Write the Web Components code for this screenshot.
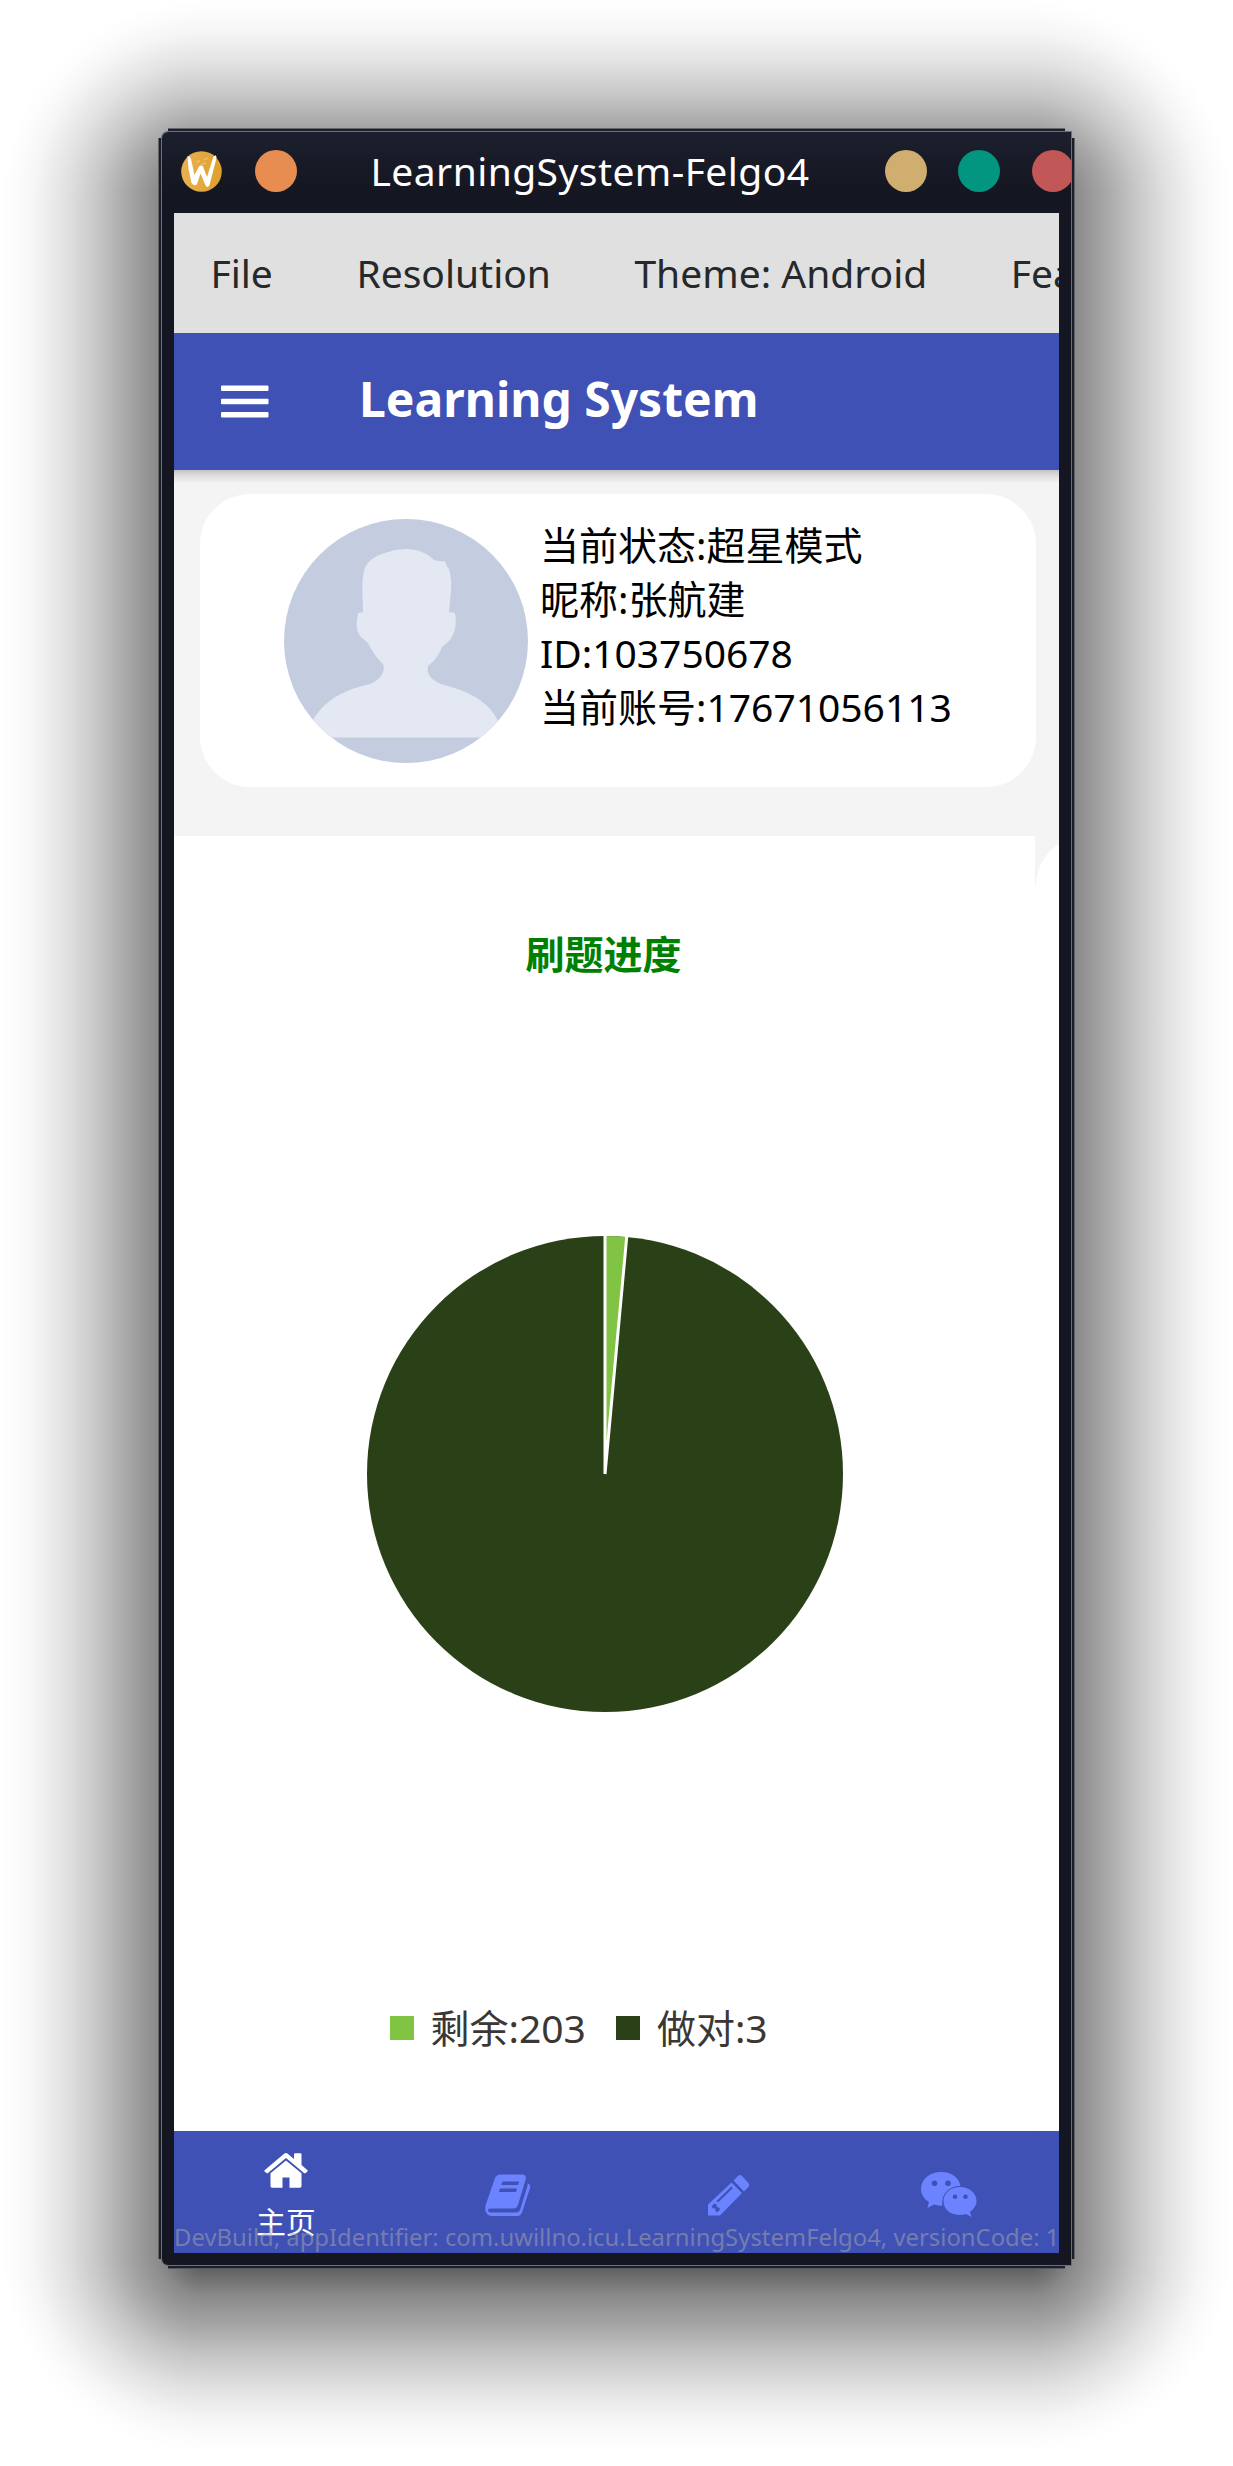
<!DOCTYPE html>
<html lang="zh-CN">
<head>
<meta charset="utf-8">
<title>LearningSystem-Felgo4</title>
<style>
html,body{margin:0;background:#fff}
body{width:1233px;height:2466px;overflow:hidden;font-family:"Noto Sans","Noto Sans CJK SC",sans-serif;font-size:39px}
</style>
</head>
<body>
<app-window>
  <title-bar slot="title">LearningSystem-Felgo4</title-bar>
  <menu-bar><span>File</span><span>Resolution</span><span>Theme: Android</span><span>Features</span></menu-bar>
  <nav-bar>Learning System</nav-bar>
  <main-page></main-page>
  <tab-bar></tab-bar>
</app-window>
<script>
function define(name, html) {
  const t = document.createElement('template');
  t.innerHTML = html;
  customElements.define(name, class extends HTMLElement {
    constructor() {
      super();
      this.attachShadow({mode: 'open'}).appendChild(t.content.cloneNode(true));
    }
  });
}

// Window shadow: one falloff curve, used for the four edges and the four corners.
const falloff = [[0,.7],[20,.62],[47,.46],[78,.345],[108,.22],[140,.115],[172,.035],[190,.01],[205,0]]
  .map(([d, a]) => `rgba(0,0,0,${a}) ${d}px`).join(',');
const corner = (at, pos, size) => `radial-gradient(circle 217px at ${at},${falloff}) ${pos}/${size} no-repeat`;
const edge = (to, pos, size) => `linear-gradient(to ${to},${falloff}) ${pos}/${size} no-repeat`;
const shadow = [
  corner('100% 100%', '0 0', '205px 203px'),
  corner('0 100%', '1028px 0', '205px 203px'),
  corner('100% 0', '0 2249px', '205px 217px'),
  corner('0 0', '1028px 2249px', '205px 217px'),
  edge('top', '205px 0', '823px 203px'),
  edge('bottom', '205px 2249px', '823px 217px'),
  edge('left', '0 203px', '205px 2046px'),
  edge('right', '1028px 203px', '205px 2046px')
].join(',');

define('app-window', `
<style>
:host{display:block;padding:132px 162px 201px;box-sizing:border-box;height:2466px;background:${shadow}}
.frame{width:909px;height:2133px;display:flex;flex-direction:column;background:linear-gradient(#1c1f2d,#141721 60px);border-radius:6px 0 0 6px;
box-shadow:0 0 0 1px #6b6f7a,0 -9px 0 -6px #1b1e2b,0 9px 0 -6px #1b1e2b,-9px 0 0 -6px #1b1e2b,9px 0 0 -6px #1b1e2b,
0 -10px 0 -6px #626469,0 10px 0 -6px #555860,-10px 0 0 -6px #626469,10px 0 0 -6px #626469}
.client{margin:0 12px;height:2040px;overflow:hidden;display:flex;flex-direction:column}
</style>
<div class="frame"><slot name="title"></slot><div class="client"><slot></slot></div></div>`);

define('title-bar', `
<style>
:host{display:flex;align-items:center;height:81px;box-sizing:border-box;padding:0 0 3px 19px;color:#fff;overflow:hidden}
svg,i{flex:none;display:block}
i{width:42px;height:42px;border-radius:50%}
.o{background:#e88d51;margin-left:32.500px}
.t{flex:none;margin-left:74px;width:443px;white-space:nowrap;line-height:54px;letter-spacing:.43px}
.b{display:flex;flex:none;gap:31.700px;margin-left:71px}
</style>
<svg width="41" height="41" viewBox="0 0 41 41"><defs><linearGradient id="g"><stop stop-color="#e9b053"/><stop offset="1" stop-color="#dda12b"/></linearGradient></defs><circle cx="20.5" cy="20.5" r="20.3" fill="url(#g)"/><path fill="#fff" d="M6.500 5Q9 5 10 8L13.500 24L18 15.500Q20 13.500 22 15.500L26 26L32 7Q32.500 4 35 4.500Q36 6 35 9L28.500 34Q26.500 37.500 24.500 34.500L19.500 22.500L16 33Q13.500 36 10.500 32L7.500 18Z"/><path d="M15 11l4-1M23 9l4-2M20 14l5-2" stroke="#f5d391" stroke-width=".8"/></svg>
<i class="o"></i><div class="t"><slot></slot></div>
<div class="b"><i style="background:#cfae70"></i><i style="background:#02957f"></i><i style="background:#c15757"></i></div>`);

define('menu-bar', `
<style>
:host{display:flex;flex:none;align-items:center;gap:83.500px;height:120px;box-sizing:border-box;padding:0 0 0 36.500px;background:#e0e0e0;color:#26282a;white-space:nowrap;line-height:54px}
</style><slot></slot>`);

define('nav-bar', `
<style>
:host{display:flex;flex:none;align-items:center;height:137px;box-sizing:border-box;padding:0 0 6px 47px;background:#4051b5;color:#fff;font-size:48px;font-weight:700;line-height:66px;white-space:nowrap;position:relative;z-index:1}
:host::after{content:"";position:absolute;left:0;right:0;top:137px;height:13px;background:linear-gradient(#c3c3c3,#d9d9d9 35%,#f4f4f4)}
svg{flex:none;margin:6px 90px 0 0}
</style>
<svg width="48" height="33" viewBox="0 0 48 33" fill="#fff"><rect x="0" y=".5" width="47.5" height="5.5" rx="1"/><rect x="0" y="13.7" width="47.5" height="5.5" rx="1"/><rect x="0" y="27" width="47.5" height="5.5" rx="1"/></svg>
<slot></slot>`);

define('user-avatar', `
<style>:host{display:block;flex:none;width:244px;height:244px}svg{display:block}</style>
<svg width="244" height="244" viewBox="0 0 244 244"><defs><clipPath id="c"><circle cx="122" cy="122" r="122"/></clipPath></defs>
<g clip-path="url(#c)"><rect width="244" height="244" fill="#c4cce0"/>
<path fill="#e4e8f2" d="M122 30C134 30 143 34 150 41Q156 43 161 42Q162 47 165 50Q168 60 167 72L165 93L171 94C173 106 171 114 166 121L158 128C154 138 150 142 144 147C142 156 148 161 157 165C180 171 204 180 214 202V218.500H28V203C40 180 63 170 86 165C96 161 102 153 99 145C92 138 88 132 84 124L76 117C71 110 73 101 74 94L79 93C79 80 77 64 80 52C84 37 101 34 111 31Z"/></g></svg>`);

define('user-card', `
<style>
:host{display:flex;flex:none;box-sizing:border-box;margin:24px 23px 0 26px;height:293px;padding:25px 0 0 84px;background:#fff;border-radius:50px;color:#000}
.info{margin:-1px 0 0 12px;line-height:54px;white-space:nowrap;display:flex;flex-direction:column}
</style>
<user-avatar></user-avatar><div class="info"><slot></slot></div>`);

define('pie-chart', `
<style>
:host{display:flex;flex:none;flex-direction:column;align-items:center;box-sizing:border-box;width:861px;height:1295px;padding-top:89px;background:#fff}
h2{margin:0;font-size:39px;line-height:58px;font-weight:700;color:#008000;padding-right:2px}
svg{display:block;margin-top:251px}
.legend{display:flex;align-items:center;margin:285px 0 0;line-height:58px;color:#3b3734;width:430px;white-space:nowrap}
i{flex:none;width:24px;height:24px;margin-right:17px}
span+i{margin-left:30px}
</style>
<h2>刷题进度</h2>
<svg width="480" height="480" viewBox="-240 -240 480 480"><circle r="238" fill="#2a4117"/><path d="M0 0V-238A238 238 0 0 1 21.700 -237Z" fill="#81c342" /><path d="M0 0V-240M0 0L21.900 -239" stroke="#fff" stroke-width="3"/></svg>
<div class="legend"><i style="background:#81c342"></i><span>剩余:203</span><i style="background:#2a4117"></i><span>做对:3</span></div>`);

define('main-page', `
<style>
:host{display:flex;flex-direction:column;flex:none;height:1661px;background:#f4f4f4;overflow:hidden}
.row{display:flex;margin-top:49px}
.next{flex:none;width:400px;margin-left:1px;background:#fff;border-radius:50px 0 0 0}
.fill{flex:none;width:1px;margin:50px -1px 0 0;background:#fdfdfd}
</style>
<user-card><div>当前状态:超星模式</div><div>昵称:张航建</div><div>ID:103750678</div><div>当前账号:17671056113</div></user-card>
<div class="row"><pie-chart></pie-chart><div class="fill"></div><div class="next"></div></div>`);

define('tab-bar', `
<style>
:host{display:flex;flex:none;height:122px;background:#4051b5;color:#fff;position:relative;overflow:hidden}
.tab{flex:1;display:flex;flex-direction:column;align-items:center;font-size:30px;line-height:40px;padding-left:2px}
svg{display:block;overflow:visible}
.tab span{margin-top:14px}
.dev{position:absolute;left:0;bottom:0;font-size:23.850px;line-height:32px;white-space:nowrap;color:rgba(170,170,170,.5)}
</style>
<div class="tab"><svg style="margin-top:22px" width="44" height="35" viewBox="0 0 44 35" fill="#fff"><path d="M22 0Q23 0 24 1L30 6V1Q30 .3 31 .3H36.500Q37.500 .3 37.500 1.200V12L43.500 17.200Q44 18 43.400 18.600L41.500 20.200Q40.800 20.600 40 20L22 5L4 20Q3 20.600 2.500 20L.5 18.500Q0 18 .6 17.200L19.500 1.200Q21 0 22 0Z"/><path d="M22 7.500L37.500 20.300V33Q37.500 34.800 36 34.800H25.500V24.500H18.500V34.800H8Q6.500 34.800 6.500 33V20.300Z"/></svg><span>主页</span></div>
<div class="tab"><svg style="margin-top:43px" width="46" height="43" viewBox="0 0 46 43"><path fill="#6b83ff" fill-rule="evenodd" d="M15 .5H37Q42 1 40.500 6L33 31Q31.700 34.500 28 34.500H6Q3.500 34.500 3 35.500Q2.800 38.500 6 38.500H31Q34 38.500 35 36L42.500 12Q43 10 42.500 9Q46 10.500 45 14L37 38.500Q35.500 42 32 42H7Q1 41.500 .2 35.500Q0 32.500 1 30L10 4Q11 1 15 .5ZM17.500 7.500L16.300 11H33L34.200 7.500ZM15 14.500L13.800 18H31L32 14.500Z"/></svg></div>
<div class="tab"><svg style="margin-top:44px" width="42" height="42" viewBox="0 0 42 42"><path fill="#6b83ff" fill-rule="evenodd" d="M23.500 7.500L34 18L12 40.500H0V29.500ZM4.500 30L3.800 32Q5 34 7.500 33.500Q7 36.500 9 37.500L12 34.500Q11.500 32 9 32Q9 29 7 28.500ZM8.500 26L10 27.500L25 13L23.500 11.500Z"/><path fill="#6b83ff" d="M25.500 5.500L30 1Q32 -.8 34 1L40.500 8Q42 10 40.500 12L36 16.500Z"/></svg></div>
<div class="tab" style="padding:0"><svg style="margin-top:41px" width="56" height="46" viewBox="0 0 56 46"><path fill="#6b83ff" fill-rule="evenodd" d="M20 0C31 0 38 6 39.500 14C28 14 20 22 21.500 33.500Q17 34 13 32.500L6.500 36L8 30C3 27 0 22 0 17C0 7 9 0 20 0ZM13.500 8.500A2.800 2.800 0 1 0 13.500 14.100A2.800 2.800 0 1 0 13.500 8.500ZM27 8.500A2.800 2.800 0 1 0 27 14.100A2.800 2.800 0 1 0 27 8.500Z"/><path fill="#6b83ff" fill-rule="evenodd" d="M39 15C48 15 55.500 21 55.500 29C55.500 33 53 37 49 40L50.500 45L45 42C31 45.500 22.500 38 22.500 29C22.500 21 30 15 39 15ZM34 22.500A2.300 2.300 0 1 0 34 27.100A2.300 2.300 0 1 0 34 22.500ZM44.500 22.500A2.300 2.300 0 1 0 44.500 27.100A2.300 2.300 0 1 0 44.500 22.500Z"/></svg></div>
<div class="dev">DevBuild, appIdentifier: com.uwillno.icu.LearningSystemFelgo4, versionCode: 1</div>`);
</script>
</body>
</html>
